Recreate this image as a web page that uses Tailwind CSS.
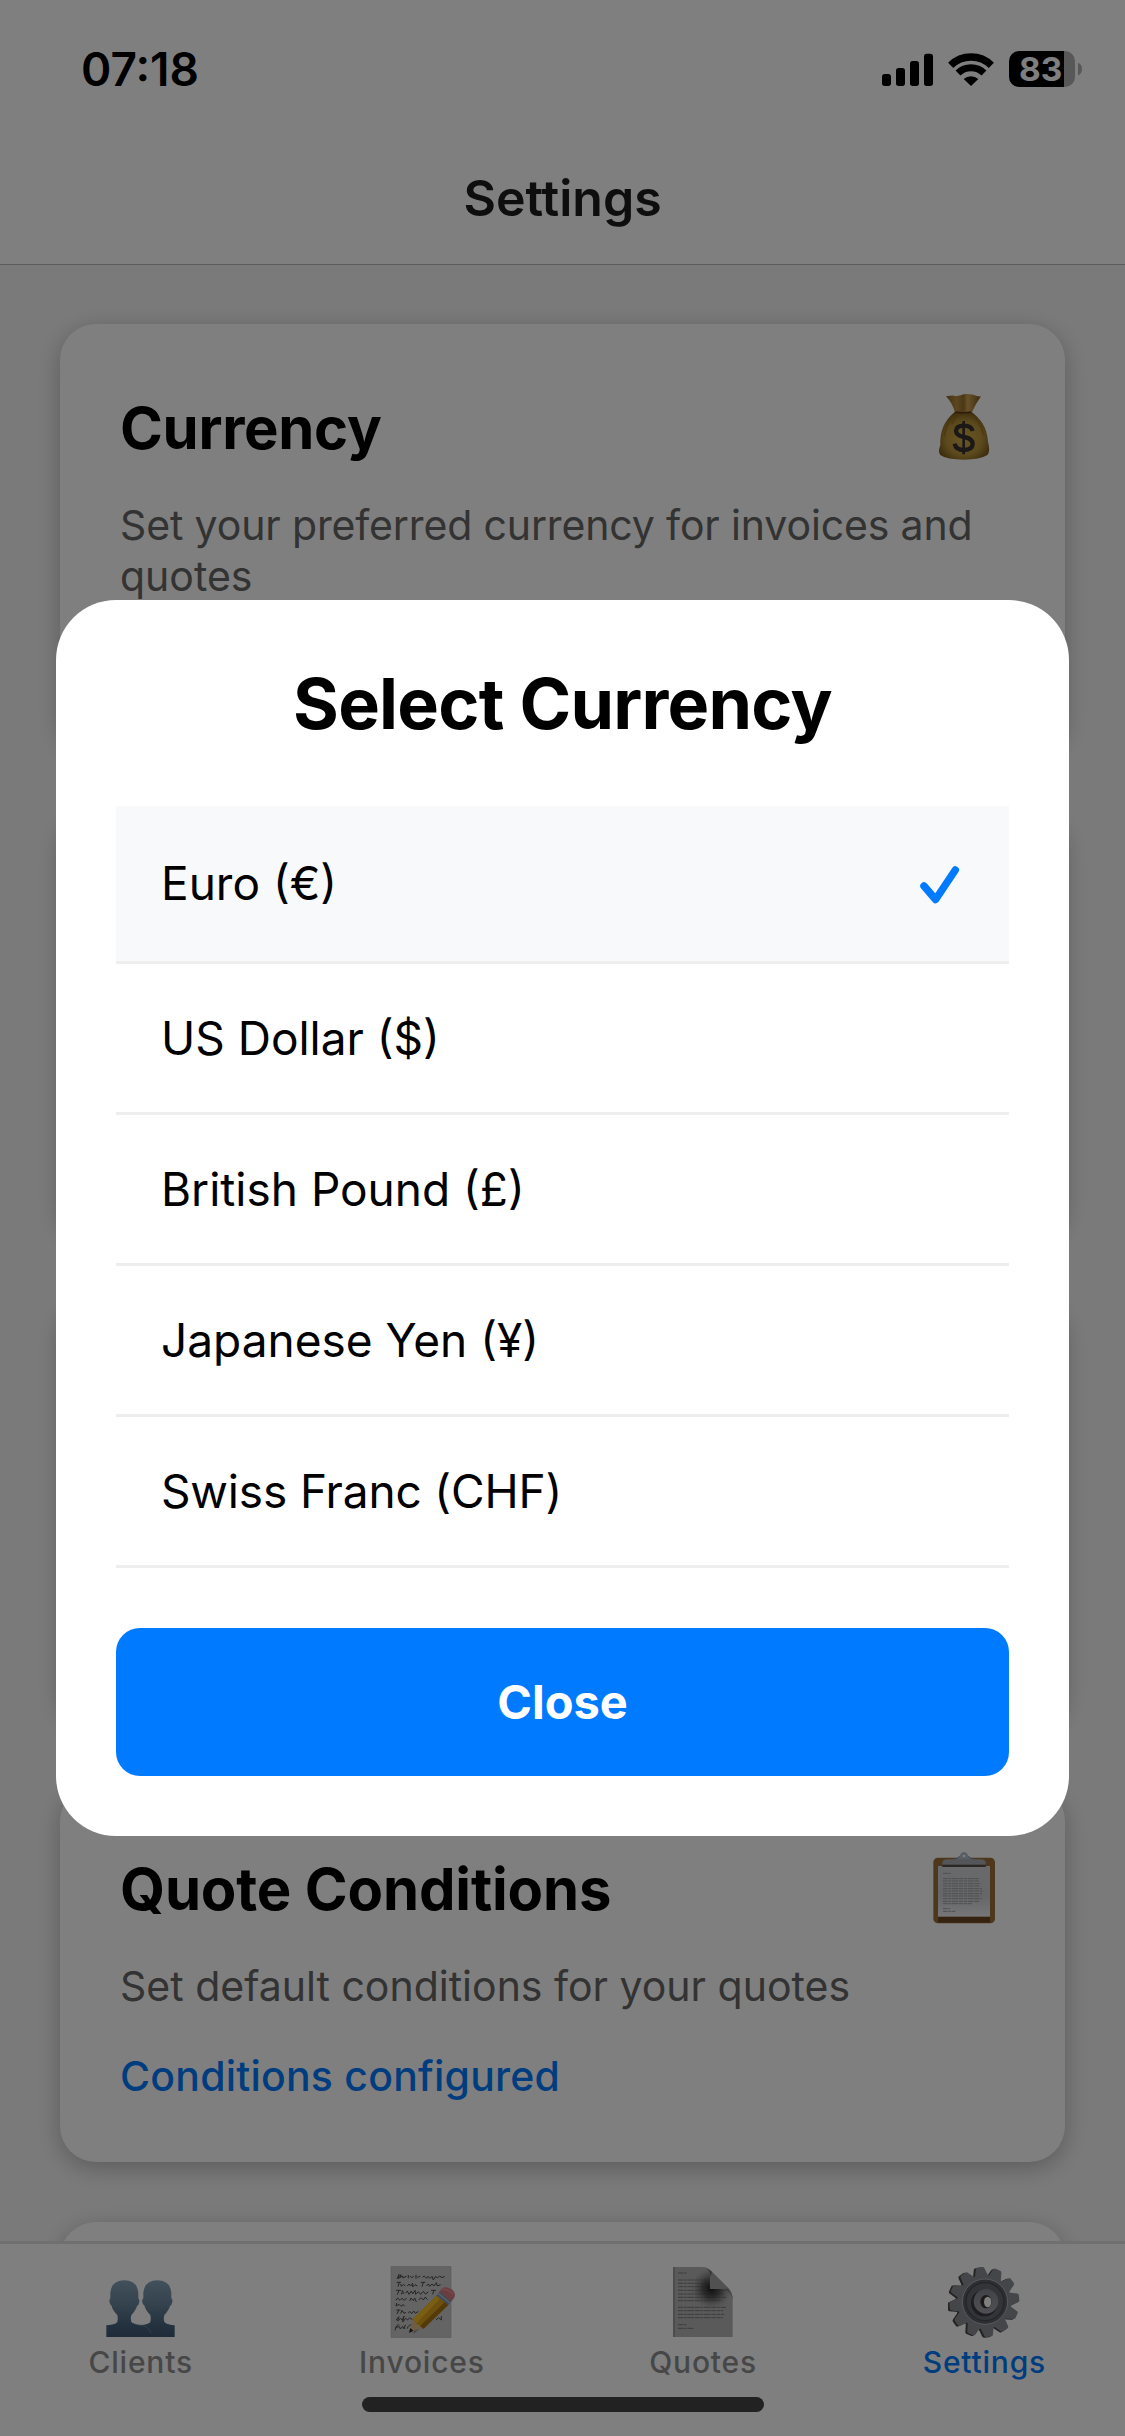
<!DOCTYPE html>
<html lang="en">

<head>
  <meta charset="UTF-8" />
  <meta name="viewport" content="width=device-width, initial-scale=1.0" />
  <title>Settings</title>
  <script src="https://cdn.jsdelivr.net/npm/@tailwindcss/browser@4"></script>
</head>

<body class="bg-[#f5f5f5] text-black font-['Inter','Liberation_Sans',sans-serif]">
  <div class="relative w-[1125px] h-[2436px] overflow-hidden flex flex-col">

    <!-- Header -->
    <header class="h-[265px] shrink-0 bg-white border-b border-[#b8b8b8] flex flex-col">
      <div class="h-[138px] pl-[81px] pr-[43px] flex items-center justify-between">
        <span class="text-[46px] font-semibold leading-none">07:18</span>
        <div class="flex items-center gap-[15px]">
          <svg class="w-[51px] h-[33px]" viewBox="66 66 153 99">
            <rect x="66" y="129" width="27" height="36" rx="8" />
            <rect x="108" y="111" width="27" height="54" rx="8" />
            <rect x="150" y="90" width="27" height="75" rx="8" />
            <rect x="192" y="68" width="27" height="97" rx="8" />
          </svg>
          <svg class="w-[46px] h-[33px]" viewBox="264 66 138 99">
            <g fill="none" stroke="#000" stroke-width="22">
              <path d="M272 103 A87 87 0 0 1 394 103" />
              <path d="M294 126 A56 56 0 0 1 372 126" stroke-width="21" />
            </g>
            <path d="M333 165 L311 144 A33 33 0 0 1 355 144 Z" />
          </svg>
          <svg class="w-[73px] h-[36px]" viewBox="447 63 219 108">
            <clipPath id="battery"><rect x="447" y="63" width="198" height="108" rx="30" /></clipPath>
            <g clip-path="url(#battery)">
              <rect x="447" y="63" width="165" height="108" />
              <rect x="612" y="63" width="33" height="108" fill="#b0b0b0" />
            </g>
            <path d="M654 98 Q666 102 666 117 Q666 132 654 136 Z" fill="#b0b0b0" />
            <text x="542" y="154" text-anchor="middle" font-size="100" font-weight="700" fill="#fff">83</text>
          </svg>
        </div>
      </div>
      <h1 class="mt-[28px] text-center text-[50px] font-semibold leading-[64px] text-[#1c1c1e]">Settings</h1>
    </header>

    <!-- Settings cards -->
    <main class="flex-1 min-h-0 overflow-hidden px-[60px] pt-[59px] flex flex-col gap-[60px]">
      <section class="h-[427px] shrink-0 bg-white rounded-[36px] p-[60px] shadow-[0_6px_23px_rgba(0,0,0,0.25)]">
        <div class="h-[88px] flex items-center justify-between">
          <h2 class="text-[58px] font-bold leading-none tracking-[-0.3px]">Currency</h2>
          <svg class="w-[72px] h-[88px] mr-[5px]" viewBox="84 42 216 264">
            <defs>
              <radialGradient id="bag" cx=".5" cy=".55" r=".6">
                <stop offset="0" stop-color="#d4b04a" />
                <stop offset=".6" stop-color="#b8933a" />
                <stop offset="1" stop-color="#705018" />
              </radialGradient>
              <linearGradient id="bagTop">
                <stop offset="0" stop-color="#856023" />
                <stop offset=".3" stop-color="#b98d40" />
                <stop offset=".5" stop-color="#97702c" />
                <stop offset=".62" stop-color="#cda455" />
                <stop offset="1" stop-color="#7b551c" />
              </linearGradient>
            </defs>
            <path d="M138 79 Q155 76 162 77 Q175 80 190 73 Q205 70 220 74 Q232 80 243 79 Q228 100 215 128 H165 Q158 100 138 79Z" fill="url(#bagTop)" />
            <path d="M164 126 H215 C240 145 261 170 264 215 Q272 245 262 255 Q240 269 192 269 Q140 269 121 255 Q113 245 121 225 C120 170 142 145 164 126Z" fill="url(#bag)" />
            <path d="M166 126 Q190 131 213 126" stroke="#5b3a12" stroke-width="4" fill="none" />
            <path d="M155 145 Q137 170 133 200 M224 142 Q243 160 250 195 M172 135 Q160 150 157 162" stroke="#8f6a22" stroke-width="5" fill="none" opacity=".6" />
            <path d="M218 183 Q214 167 192 167 Q169 167 168 182 Q168 196 192 201 Q219 206 218 223 Q216 240 192 240 Q167 240 164 221" stroke="#3a3030" stroke-width="13" fill="none" />
            <path d="M191 153 V253" stroke="#3a3030" stroke-width="8" />
          </svg>
        </div>
        <p class="mt-[28px] text-[41px] leading-[51px] text-[#666666]"><span class="tracking-[-0.14px]">Set your preferred currency for invoices and</span><br />quotes</p>
      </section>

      <section class="h-[427px] shrink-0 bg-white rounded-[36px] shadow-[0_6px_23px_rgba(0,0,0,0.25)]"></section>
      <section class="h-[427px] shrink-0 bg-white rounded-[36px] shadow-[0_6px_23px_rgba(0,0,0,0.25)]"></section>

      <section class="h-[377px] shrink-0 bg-white rounded-[36px] p-[60px] shadow-[0_6px_23px_rgba(0,0,0,0.25)]">
        <div class="h-[88px] flex items-center justify-between">
          <h2 class="text-[58px] font-bold leading-none tracking-[-0.15px]">Quote Conditions</h2>
          <svg class="w-[72px] h-[88px] mr-[5px]" viewBox="84 75 216 264">
            <defs>
              <linearGradient id="paper" x2="0" y2="1">
                <stop offset="0" stop-color="#d2d4d8" />
                <stop offset=".6" stop-color="#cdced2" />
                <stop offset="1" stop-color="#eeeef2" />
              </linearGradient>
            </defs>
            <rect x="100" y="113" width="185" height="197" rx="14" fill="#9b713a" />
            <rect x="114" y="286" width="156" height="22" fill="#6b4520" />
            <rect x="114" y="138" width="156" height="152" fill="url(#paper)" />
            <path d="M163 119 Q178 116 180 105 Q184 96 192 96 Q200 96 204 105 Q206 116 221 119Z" fill="#b2bcc8" />
            <path d="M163 118 Q175 116 179 108 M205 108 Q209 116 221 118" stroke="#6f93b8" stroke-width="3" fill="none" />
            <circle cx="192" cy="108" r="4" fill="#ffffff" />
            <path d="M127 136 V126 Q130 118 142 118 H242 Q254 118 257 126 V136Z" fill="#a8adb5" />
            <rect x="127" y="134" width="130" height="7" fill="#594c49" />
            <g stroke="#9c9da1" stroke-width="3" stroke-dasharray="14 2 9 2 18 2">
              <path d="M129 160 H152 M129 176 H236 M129 183 H238 M129 191 H242 M129 198 H240 M129 206 H246 M129 213 H250 M129 221 H246 M129 228 H240 M129 236 H245 M129 244 H240 M129 251 H215 M129 266 H150 M129 274 H166" />
            </g>
          </svg>
        </div>
        <p class="mt-[28px] text-[41px] leading-[51px] text-[#666666]">Set default conditions for your quotes</p>
        <p class="mt-[39px] text-[41px] leading-[51px] font-medium tracking-[0.22px] text-[#007aff]">Conditions configured</p>
      </section>

      <section class="h-[427px] shrink-0 bg-white rounded-[36px] shadow-[0_6px_23px_rgba(0,0,0,0.25)]"></section>
    </main>

    <!-- Tab bar -->
    <nav class="h-[195px] shrink-0 bg-white border-t-[3px] border-[#e0e0e0] flex flex-col items-center">
      <div class="w-full h-[153px] pt-[22px] grid grid-cols-4 text-[30px] leading-[36px] tracking-[0.8px] font-medium text-[#8e8e8f]">
        <div class="flex flex-col items-center gap-[6px]">
          <svg class="w-[72px] h-[72px]" viewBox="74 78 216 216">
            <defs>
              <linearGradient id="person" gradientUnits="userSpaceOnUse" x1="0" y1="120" x2="0" y2="291">
                <stop offset="0" stop-color="#84a2b8" />
                <stop offset=".45" stop-color="#68849c" />
                <stop offset=".8" stop-color="#48627c" />
                <stop offset="1" stop-color="#405672" />
              </linearGradient>
            </defs>
            <path d="M231 121 Q269 121 273 158 V175 Q279 180 275 189 Q274 196 269 198 Q266 210 252 225 Q247 245 257 250 Q265 255 283 256 V291 H180 V256 Q197 255 206 250 Q214 245 210 225 Q195 210 193 198 Q187 194 185 183 Q187 175 189 175 V158 Q193 121 231 121Z" fill="url(#person)" />
            <path d="M132 121 Q170 121 174 158 V175 Q179 180 176 189 Q175 196 170 198 Q167 210 153 225 Q148 245 158 250 Q166 255 184 256 Q208 260 214 291 H78 V256 Q98 255 107 250 Q115 245 111 225 Q96 210 94 198 Q88 194 87 183 Q88 175 90 175 V158 Q94 121 132 121Z" fill="url(#person)" />
            <path d="M158 250 Q166 255 184 256 Q205 260 212 279" stroke="#6590a5" stroke-width="2" fill="none" />
          </svg>
          <span>Clients</span>
        </div>
        <div class="flex flex-col items-center gap-[6px]">
          <svg class="w-[72px] h-[72px]" viewBox="78 78 216 216">
            <rect x="93" y="80" width="180" height="212" fill="#c8c8c9" stroke="#b4b4b5" stroke-width="2" />
            <g fill="none" stroke="#4b4b4d" stroke-width="3">
              <path d="M111 117 L117 103 L116 116 L123 104 L121 113 Q126 106 129 109 Q126 117 132 112 L140 109 M145 105 V115 M150 109 Q155 116 161 109 M168 104 V116 M172 112 L181 109 M188 112 Q192 105 195 110 L200 115 L204 109 L210 115 L216 109 L220 120 L226 110 L233 113 L239 108 L246 113 L254 109" />
              <path d="M110 127 H123 M118 127 L114 140 M122 132 L124 139 L130 133 L136 138 M142 138 L147 132 L152 138 L158 130 V141 L165 134 L172 138 M182 127 H196 M190 127 L186 140 M199 138 L205 132 L209 139 L216 132 L222 138 L229 128 L232 138 L242 134" />
              <path d="M108 151 H124 M117 151 L112 164 M124 163 L128 152 L130 162 M136 160 L142 153 L147 163 L154 153 L158 162 L165 151 L167 163 L175 155 L182 163 L190 154 L196 162 L205 156 M213 151 H228 M222 151 L218 163" />
              <path d="M108 181 L113 174 L120 181 L126 175 L133 181 L140 174 M149 183 L153 174 L160 182 L164 174 L169 186 M176 180 L183 173 L190 180 L196 171 L202 179" />
              <path d="M110 189 L108 198 L117 193 L123 199 L129 194 L134 198 M109 210 H121 M116 210 L111 222 M122 221 L126 211 L132 220 L138 217 M145 220 L149 214 L155 221 L161 213 L166 220 L175 214" />
              <path d="M108 241 Q114 232 117 230 L113 243 L122 235 L127 241 L132 228 L128 246 L137 235 L143 240 L149 233 L158 240 L168 235 M105 271 Q111 250 118 255 M106 262 L118 260 L121 267 L128 259 L132 267 L136 254 M141 266 Q149 250 156 256 M228 240 L236 233 L244 240 V228" />
            </g>
            <path d="M160 282 L277 180 L284 170 L270 158 L165 260Z" fill="#66666a" opacity=".65" />
            <path d="M147 279 L158 237 L190 262Z" fill="#dfbd87" />
            <path d="M147 279 L151 264 L160 272Z" fill="#202022" />
            <path d="M158 237 L229 167 L265 195 L190 267 Q187 256 180 258 Q175 251 170 253 Q165 240 158 237Z" fill="#d9a019" />
            <path d="M158 237 L229 167 L240 176 L169 250 Q165 240 158 237Z" fill="#f3bd28" />
            <path d="M180 258 L254 187 L265 195 L190 267Z" fill="#a87513" />
            <path d="M229 167 L239 154 L274 184 L265 195Z" fill="#8294aa" />
            <path d="M234 160 L270 189" stroke="#b7c5d4" stroke-width="4" />
            <path d="M239 155 Q247 140 259 142 Q280 146 285 162 Q286 170 274 184Z" fill="#d57c83" />
            <path d="M247 149 Q263 145 279 162" stroke="#ef9ba0" stroke-width="6" fill="none" opacity=".6" />
          </svg>
          <span>Invoices</span>
        </div>
        <div class="flex flex-col items-center gap-[6px]">
          <svg class="w-[72px] h-[72px]" viewBox="81 78 216 216">
            <defs>
              <radialGradient id="fold" gradientUnits="userSpaceOnUse" cx="214" cy="146" r="62">
                <stop offset="0" stop-color="#1c1c1c" />
                <stop offset=".45" stop-color="#464646" stop-opacity=".8" />
                <stop offset="1" stop-color="#888" stop-opacity="0" />
              </radialGradient>
            </defs>
            <path d="M99 81 H188 Q211 85 211 110 V147 H245 Q278 150 278 180 V291 H99Z" fill="#b4b4b4" />
            <path d="M99 81 H105 V291 H99Z" fill="#999999" />
            <g stroke="#797979" stroke-width="3" stroke-dasharray="15 2 9 2 20 2">
              <path d="M114 99 H141 M114 120 H198 M114 130 H204 M114 140 H206 M114 151 H256 M114 162 H250 M114 172 H258 M114 182 H245 M114 202 H258 M114 212 H250 M114 223 H253 M114 233 H248 M114 254 H141 M114 265 H160" />
            </g>
            <path d="M150 81 H188 Q211 85 211 110 V147 H245 Q278 150 278 180 V210 H150Z" fill="url(#fold)" />
            <path d="M188 81 Q204 84 216 95 L266 145 Q278 158 278 180 Q275 147 245 147 H211 V110 Q211 85 188 81Z" fill="#a2a2a2" />
            <path d="M188 81 Q211 85 211 112 L216 95 Q203 82 188 81Z M278 181 Q275 150 245 147 L262 146 Q278 160 278 181Z" fill="#3a3a3a" opacity=".5" />
          </svg>
          <span>Quotes</span>
        </div>
        <div class="flex flex-col items-center gap-[6px] text-[#007aff]">
          <svg class="w-[72px] h-[72px]" viewBox="115 78 216 216">
            <defs>
              <path id="tooth" d="M202 118 L209 85 Q210 81 215 81 H229 Q234 81 235 85 L247 118Z" />
              <g id="teeth">
                <use href="#tooth" transform="rotate(-6 224 186)" />
                <use href="#tooth" transform="rotate(24 224 186)" />
                <use href="#tooth" transform="rotate(54 224 186)" />
                <use href="#tooth" transform="rotate(84 224 186)" />
                <use href="#tooth" transform="rotate(114 224 186)" />
                <use href="#tooth" transform="rotate(144 224 186)" />
                <use href="#tooth" transform="rotate(174 224 186)" />
                <use href="#tooth" transform="rotate(204 224 186)" />
                <use href="#tooth" transform="rotate(234 224 186)" />
                <use href="#tooth" transform="rotate(264 224 186)" />
                <use href="#tooth" transform="rotate(294 224 186)" />
                <use href="#tooth" transform="rotate(324 224 186)" />
                <circle cx="224" cy="186" r="81" />
              </g>
              <linearGradient id="metal" x2="0" y2="1">
                <stop offset="0" stop-color="#82868f" />
                <stop offset="1" stop-color="#a0a1a8" />
              </linearGradient>
            </defs>
            <use href="#teeth" x="-6" y="2" fill="#4b4745" />
            <use href="#teeth" fill="#8a8d95" />
            <circle cx="226" cy="185" r="68" fill="#5b5e64" stroke="#b0b3ba" stroke-width="3" />
            <circle cx="226" cy="185" r="57" fill="#65686f" stroke="#484a50" stroke-width="4" />
            <circle cx="224" cy="189" r="40" fill="#3c3b3e" />
            <circle cx="229" cy="184" r="37" fill="url(#metal)" />
            <ellipse cx="229" cy="185" rx="17" ry="20" fill="#3b3433" />
            <ellipse cx="234" cy="186" rx="11" ry="16" fill="#fff" />
          </svg>
          <span>Settings</span>
        </div>
      </div>
      <div class="w-[402px] h-[15px] rounded-full bg-[#444444]"></div>
    </nav>

    <!-- Modal -->
    <div class="absolute inset-0 bg-black/50 flex items-center justify-center">
      <div class="w-[1013px] h-[1236px] bg-white rounded-[60px] p-[60px] flex flex-col">
        <h2 class="pt-px text-center text-[70px] leading-[86px] font-bold tracking-[-0.75px]">Select Currency</h2>
        <ul class="mt-[59px] text-[46px]">
          <li class="h-[158px] px-[45px] flex items-center justify-between bg-[#f8f9fb] border-b-[3px] border-[#eeeeee]">
            <span>Euro (€)</span>
            <svg class="w-[40px] h-[40px] mr-[4px]" viewBox="920 863.5 40 40" fill="none" stroke="#007aff" stroke-width="7.5" stroke-linecap="round" stroke-linejoin="round">
              <path d="M924 885.5 L935.6 899 L955.3 869.5" />
            </svg>
          </li>
          <li class="h-[151px] px-[45px] flex items-center border-b-[3px] border-[#eeeeee]">US Dollar ($)</li>
          <li class="h-[151px] px-[45px] flex items-center border-b-[3px] border-[#eeeeee]">British Pound (£)</li>
          <li class="h-[151px] px-[45px] flex items-center border-b-[3px] border-[#eeeeee]">Japanese Yen (¥)</li>
          <li class="h-[151px] px-[45px] flex items-center border-b-[3px] border-[#eeeeee] tracking-[-0.15px]">Swiss Franc (CHF)</li>
        </ul>
        <button class="mt-[60px] h-[148px] w-full rounded-[24px] bg-[#007aff] text-white text-[47px] font-bold">Close</button>
      </div>
    </div>
  </div>
</body>

</html>
